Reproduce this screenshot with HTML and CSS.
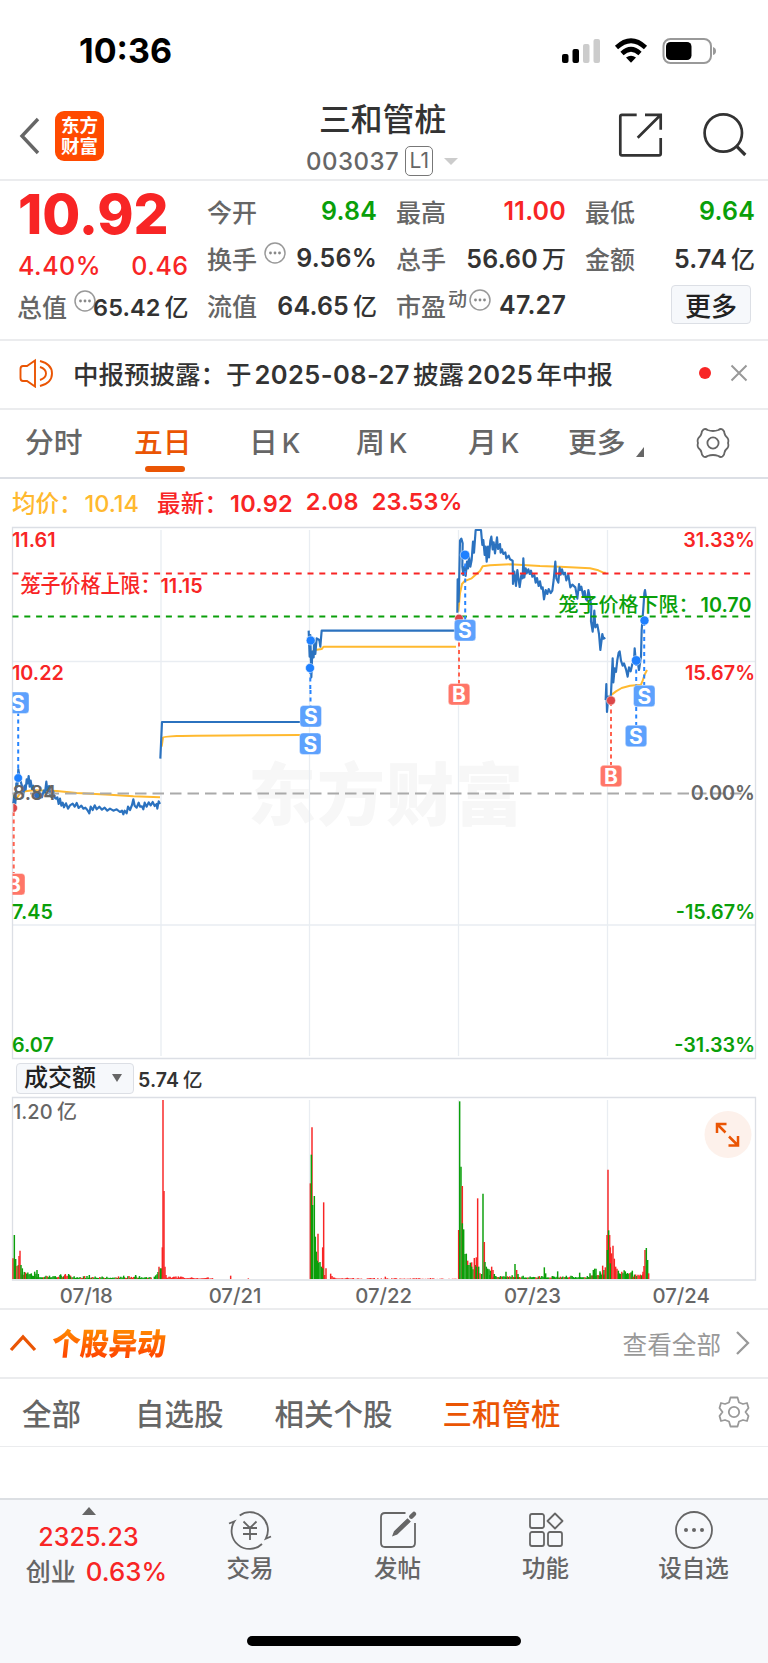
FILE: index.html
```
<!DOCTYPE html>
<html lang="zh-CN">
<head>
<meta charset="utf-8">
<title>三和管桩</title>
<link rel="stylesheet" href="styles.css">
</head>
<body>
<div class="status">
  <span class="clock">10:36</span>
  <svg class="status-icons" width="160" height="28" viewBox="560 37 160 28">
    <rect x="562" y="54" width="6.500" height="9" rx="2"/>
    <rect x="572.500" y="49" width="6.500" height="14" rx="2"/>
    <rect x="583" y="44" width="6.500" height="19" rx="2" fill="#ccc"/>
    <rect x="593.500" y="39" width="6.500" height="24" rx="2" fill="#ccc"/>
    <g fill="none" stroke="#000" stroke-width="4.600">
      <path d="M616.500 47.500Q631 34 645.500 47.500"/>
      <path d="M622 53.500Q631 45 640 53.500"/>
    </g>
    <path d="M626 57.500Q631 54 636 57.500L631 62.800Z"/>
    <rect x="663.500" y="39" width="47.500" height="24" rx="7" fill="#fff" stroke="#999" stroke-width="2"/>
    <rect x="666" y="42" width="25.500" height="18" rx="4.500"/>
    <path d="M713 47Q716 48 716 51T713 55Z" fill="#999"/>
  </svg>
</div>
<header class="head">
  <svg class="back" width="22" height="38" viewBox="0 0 22 38"><path d="M20 2L4 19L20 36" fill="none" stroke="#666" stroke-width="3.400"/></svg>
  <div class="logo"><span>东方</span><span>财富</span></div>
  <div class="title">
    <h1>三和管桩</h1>
    <div class="code"><span>003037</span><b>L1</b><i></i></div>
  </div>
  <svg class="share" width="46" height="46" viewBox="617 113 46 46"><path d="M636.700 115.800H622Q620.300 115.800 620.300 117.500V154.700Q620.300 156.400 622 156.400H659Q660.700 156.400 660.700 154.700V139M645 115.800H660.700V130.700M660 116.500L637.700 138.800" fill="none" stroke="#333" stroke-width="2.700"/></svg>
  <svg class="search" width="46" height="46" viewBox="702 113 46 46"><circle cx="723.300" cy="134" r="18.700" fill="none" stroke="#333" stroke-width="2.700"/><path d="M736 146.700L745.300 156" stroke="#333" stroke-width="3.200"/></svg>
</header>
<section class="quote">
  <div class="col first">
    <div class="price">10.92</div>
    <div class="cell red"><span>4.40%</span><span>0.46</span></div>
    <div class="cell"><label>总值</label><svg class="dots" width="22" height="22" viewBox="0 0 22 22"><use href="#dots"/></svg><span class="tight">65.42<em>亿</em></span></div>
  </div>
  <div class="col">
    <div class="cell"><label>今开</label><span class="green">9.84</span></div>
    <div class="cell"><label>换手</label><svg class="dots" width="22" height="22" viewBox="0 0 22 22"><g id="dots"><circle cx="11" cy="11" r="10" fill="none" stroke="#999" stroke-width="1.500"/><circle cx="6.500" cy="11" r="1.400" fill="#888"/><circle cx="11" cy="11" r="1.400" fill="#888"/><circle cx="15.500" cy="11" r="1.400" fill="#888"/></g></svg><span>9.56%</span></div>
    <div class="cell"><label>流值</label><span>64.65<em>亿</em></span></div>
  </div>
  <div class="col">
    <div class="cell"><label>最高</label><span class="red">11.00</span></div>
    <div class="cell"><label>总手</label><span>56.60<em>万</em></span></div>
    <div class="cell"><label>市盈<sup>动</sup></label><svg class="dots near" width="22" height="22" viewBox="0 0 22 22"><use href="#dots"/></svg><span>47.27</span></div>
  </div>
  <div class="col">
    <div class="cell"><label>最低</label><span class="green">9.64</span></div>
    <div class="cell"><label>金额</label><span>5.74<em>亿</em></span></div>
    <div class="cell"><button class="more">更多</button></div>
  </div>
</section>
<section class="notice">
  <svg width="34" height="30" viewBox="19 358 34 30" fill="none" stroke="#ea5504" stroke-width="1.900"><path d="M35 360.500L27 366H23Q20.500 366 20.500 369V378Q20.500 381 23 381H27L35 386.500Z"/><path d="M40 367Q46 369 46 373.500T40 380M40 361Q52 364 52 373.500T40 386"/></svg>
  <p>中报预披露：于<i>2025-08-27</i>披露<i>2025</i>年中报</p>
  <span class="dot"></span>
  <svg width="18" height="18" viewBox="0 0 18 18"><path d="M1.500 1.500L16.500 16.500M16.500 1.500L1.500 16.500" stroke="#999" stroke-width="2"/></svg>
</section>
<nav class="periods">
  <a>分时</a><a class="on">五日</a><a>日<i>K</i></a><a>周<i>K</i></a><a>月<i>K</i></a><a>更多<s></s></a>
  <svg class="gear" width="34" height="34" viewBox="-17 -17 34 34" fill="none" stroke="#666" stroke-width="1.800"><path d="M-9.500 -13.500Q-7.500 -14.700 -5.500 -13Q0 -11 5.500 -13Q7.500 -14.700 9.500 -13.500Q11.500 -12 11.500 -9.500Q12 -7 14.500 -5Q16 -3 15 0Q16 3 14.500 5Q12 7 11.500 9.500Q11.500 12 9.500 13.500Q7.500 14.700 5.500 13Q0 11 -5.500 13Q-7.500 14.700 -9.500 13.500Q-11.500 12 -11.500 9.500Q-12 7 -14.500 5Q-16 3 -15 0Q-16 -3 -14.500 -5Q-12 -7 -11.500 -9.500Q-11.500 -12 -9.500 -13.500Z"/><circle r="5.600"/></svg>
</nav>
<div class="legend"><span class="avg">均价：<i>10.14</i></span><span class="red">最新：<i>10.92</i></span><i class="red l3">2.08</i><i class="red l4">23.53%</i></div>
<svg class="chart" width="768" height="538" viewBox="0 522 768 538">
  <text class="water" x="248" y="820" textLength="275">东方财富</text>
  <g class="grid"><path d="M161 530V1056M309.500 530V1056M458.500 530V1056M607.500 530V1056M13 661.500H755M13 925H755"/><path class="frame" d="M12.500 527.500H755.500V1058.500H12.500Z"/></g>
  <g class="avg-line">
    <g transform="translate(0 520) scale(.33333)"><path d="M40 850L50 835L60 820L75 814L100 811L170 813L230 819L330 824L400 829L480 832M485 680L489 653Q490 650 530 648Q600 646 900 645M932 408L940 393L950 389L965 387L971 380H1368"/></g>
    <g transform="translate(440 520) scale(.33333)"><path d="M55 275L60 220L66 192L74 183L95 175L112 160L120 153L128 139L150 136L210 133L300 138L360 140L450 145L475 151L490 158L497 158M500 540L512 526L528 514L545 504L570 497L603 494L608 482L614 464L621 450"/></g>
  </g>
  <g class="price-line">
    <g transform="translate(0 520) scale(.33333)"><path d="M40 850L44 820L46 850L49 790L52 800L55 748L59 772L63 788L68 805L70 822L74 797L77 809L80 778L83 790L86 768L89 800L92 782L96 807L100 797L104 820L110 820L116 836L120 818L126 832L131 812L135 818L139 785L142 812L147 798L151 828L156 832L160 815L164 833L168 836L172 832L176 852L180 836L184 857L188 848L192 862L198 850L204 866L210 856L218 851L224 860L230 849L236 864L244 857L250 866L256 863L262 870L268 880L272 860L278 870L284 856L290 868L298 860L306 869L314 863L322 872L330 866L340 872L350 868L360 876L366 872L370 883L374 872L380 880L384 860L390 870L396 855L400 838L404 857L410 863L416 848L420 860L426 859L430 868L434 848L440 860L446 847L452 856L458 846L464 858L470 852L472 866L476 844L480 852M481 716L486 606H930M926 332L929 410L931 345L934 472L937 395L941 412L942 365L946 402L950 355L958 360L961 380L965 332H1368"/></g>
    <g transform="translate(440 520) scale(.33333)"><path d="M52 278L53 178L56 245L58 155L60 62L64 56L68 70L67 140L70 165L74 140L77 168L81 125L84 145L87 110L91 140L95 120L99 65L102 98L107 30H123L127 75L130 60L134 105L137 80L140 125L144 80L147 112L151 62L154 50L158 88L161 67L165 100L171 52L174 87L180 72L182 98L186 88L190 102L196 97L199 115L206 107L210 118L218 122L219 192L223 155L228 198L232 150L239 201L244 165L248 175L250 115L253 172L257 145L260 160L265 148L269 162L273 152L277 170L283 165L287 188L291 174L296 198L300 184L304 206L308 202L312 238L317 210L322 222L326 207L332 219L337 212L341 180L346 125L349 175L355 188L359 143L362 164L366 148L370 163L375 158L379 181L385 164L391 202L397 194L406 202L412 236L417 192L420 210L424 200L430 230L434 213L438 238L442 242L445 210L450 235L454 258L453 304L458 335L463 272L466 322L472 314L477 342L481 390L487 342L490 356L496 353M497 540L499 492L501 576L505 530L510 550L513 520L518 415L520 487L524 445L528 456L532 420L536 398L539 394L543 422L548 437L552 430L558 448L563 470L567 442L572 454L577 432L582 425L584 385L588 430L592 420L597 450L603 410L605 330L610 265L613 220L615 210L618 232"/></g>
  </g>
  <g fill="none" stroke-width="2">
    <path d="M12.500 573.500H752" stroke="#f82525" stroke-dasharray="6 5.800"/>
    <path d="M12.500 616.500H752" stroke="#0a9f0a" stroke-dasharray="6 5.800"/>
    <path d="M12.500 793.500H752" stroke="#aaa" stroke-dasharray="11.500 6"/>
  </g>
  <g class="sell-stem"><path d="M18.200 712V776M310.500 690V725M310.300 670V690M465.200 556V620M644.200 622V685M636.200 662V725"/></g>
  <g class="buy-stem"><path d="M13.700 812V873M459 620V684M611 702V765"/></g>
  <g fill="#1e80ff" stroke="#fff" stroke-opacity=".5" stroke-width="1">
    <circle cx="18.200" cy="778" r="4.300"/><circle cx="310.700" cy="640.500" r="4.500"/><circle cx="310" cy="668" r="4.500"/><circle cx="465" cy="555" r="4.800"/><circle cx="644.500" cy="620.500" r="4.500"/><circle cx="636.200" cy="660.500" r="4.800"/>
    <circle cx="37.500" cy="795" r="4" fill="#2f6fbe"/>
    <path d="M13 803.500A4.500 4.500 0 0 1 13 812.500Z" fill="#db4748"/><circle cx="459" cy="618.500" r="4.300" fill="#db4748"/><circle cx="611" cy="700.500" r="4.500" fill="#db4748"/>
  </g>
  <clipPath id="inside"><rect x="12.500" y="528" width="743" height="530"/></clipPath>
  <g class="tags" clip-path="url(#inside)">
    <g class="sell"><rect x="7.500" y="692" width="21.500" height="21.500" rx="3.500"/><rect x="300" y="705.500" width="21.500" height="21.500" rx="3.500"/><rect x="299.500" y="733" width="21.500" height="21.500" rx="3.500"/><rect x="454.300" y="619.500" width="21.500" height="21.500" rx="3.500"/><rect x="633.500" y="685.300" width="21.500" height="21.500" rx="3.500"/><rect x="625.300" y="725.300" width="21.500" height="21.500" rx="3.500"/></g>
    <g class="buy"><rect x="3.500" y="873.500" width="21.500" height="21.500" rx="3.500"/><rect x="448.300" y="683.500" width="21.500" height="21.500" rx="3.500"/><rect x="600.300" y="765.300" width="21.500" height="21.500" rx="3.500"/></g>
    <text x="18" y="710.500">S</text><text x="311" y="724">S</text><text x="310.500" y="751.500">S</text><text x="465" y="638">S</text><text x="644.500" y="704">S</text><text x="636" y="744">S</text>
    <text x="14" y="892">B</text><text x="459" y="702">B</text><text x="611" y="784">B</text>
  </g>
  <g class="axis">
    <g fill="#f82525"><text x="12" y="547">11.61</text><text x="12" y="680">10.22</text><text class="r" x="755" y="547">31.33%</text><text class="r" x="755" y="680">15.67%</text>
    <text class="cn" x="20.500" y="593">笼子价格上限：</text><text x="160.500" y="593">11.15</text></g>
    <g fill="#666"><text x="12.500" y="799.500">8.84</text><text class="r" x="755" y="799.500">0.00%</text></g>
    <g fill="#0a9f0a"><text x="12" y="919">7.45</text><text x="12" y="1051.500">6.07</text><text class="r" x="755" y="919">-15.67%</text><text class="r" x="755" y="1051.500">-31.33%</text>
    <text class="cn" x="558.500" y="612">笼子价格下限：</text><text class="r" x="751.500" y="612">10.70</text></g>
  </g>
</svg>
<div class="vol-head"><div class="select">成交额<i></i></div><span>5.74<em>亿</em></span></div>
<div class="volume">
  <svg id="vol" width="768" height="186" viewBox="0 1096 768 186">
    <path class="grid" d="M309.500 1100V1279M458.500 1100V1279M607.500 1100V1279"/>
    <path d="M12.500 1097.500H755.500V1280H12.500Z" fill="none" stroke="#dcdfe5" stroke-width="1.300"/>
    <text x="13" y="1118.500">1.20</text><text x="57" y="1119">亿</text>
    <g id="bars" transform="translate(0 1050) scale(.33333)"></g>
    <circle cx="728" cy="1134.500" r="23.500" fill="#fdf1eb"/>
    <path d="M725.500 1132.500L717 1124M717 1133V1124H726.500M729 1136.500L738 1145.500M738 1136V1145.500H728.500" fill="none" stroke="#ea5504" stroke-width="2.500"/>
  </svg>
</div>
<div class="dates"><span>07/18</span><span>07/21</span><span>07/22</span><span>07/23</span><span>07/24</span></div>
<section class="moves">
  <svg width="28" height="20" viewBox="0 0 28 20"><path d="M2 17L14 4L26 17" fill="none" stroke="#ea5504" stroke-width="3.300"/></svg>
  <h2>个股异动</h2>
  <a>查看全部</a>
  <svg width="16" height="26" viewBox="0 0 16 26"><path d="M2 2L13 13L2 24" fill="none" stroke="#999" stroke-width="2.300"/></svg>
</section>
<nav class="filters">
  <a>全部</a><a>自选股</a><a>相关个股</a><a class="on">三和管桩</a>
  <svg width="32" height="32" viewBox="-16 -16 32 32" fill="none" stroke="#999" stroke-width="1.800" stroke-linejoin="round"><path d="M-3.500 -14.500H3.500L5 -9.500L9 -8L13 -9L14.500 -4L11.500 0L14.500 4L13 9L9 8L5 9.500L3.500 14.500H-3.500L-5 9.500L-9 8L-13 9L-14.500 4L-11.500 0L-14.500 -4L-13 -9L-9 -8L-5 -9.500Z"/><circle r="5.200"/></svg>
</nav>
<main class="blank"></main>
<footer class="bar">
  <div class="index"><i class="up"></i><b>2325.23</b><p>创业<b>0.63%</b></p></div>
  <div class="tool"><svg width="44" height="40" viewBox="-22 -20 44 40"><path d="M-10.300 -14.600A18 18 0 0 1 15.800 8.700L21 6.500M12 14A18 18 0 0 1 -15.600 -8.700L-21 -6.500M-6.500 -8.500L0 -2L6.500 -8.500M0 -2V10M-7 -2H7M-7 4H7"/></svg><span>交易</span></div>
  <div class="tool"><svg width="44" height="40" viewBox="-22 -20 44 40"><path d="M7.500 -17H-13Q-17 -17 -17 -13V13Q-17 17 -13 17H13Q17 17 17 13V-7"/><path d="M-5 5.500L-3.500 1.500L9.500 -11L12 -8.500L-1 4Z" fill="#666" stroke-width="1.200"/><path d="M13.300 -13.300L16 -16" stroke-width="4.500" stroke-linecap="round"/></svg><span>发帖</span></div>
  <div class="tool"><svg width="44" height="40" viewBox="-22 -20 44 40"><rect x="-16" y="-16" width="14" height="14" rx="2"/><rect x="-16" y="2" width="14" height="14" rx="2"/><rect x="2" y="2" width="14" height="14" rx="2"/><path d="M9 -16.500L16.500 -9L9 -1.500L1.500 -9Z" stroke-linejoin="round"/></svg><span>功能</span></div>
  <div class="tool"><svg width="44" height="40" viewBox="-22 -20 44 40"><circle r="18"/><g fill="#666" stroke="none"><circle cx="-8" r="2"/><circle r="2"/><circle cx="8" r="2"/></g></svg><span>设自选</span></div>
</footer>
<div class="home"><i></i></div>
<script src="volume.js"></script>
</body>
</html>
```
FILE: styles.css
```
* { box-sizing: border-box; }
body { margin: 0; width: 768px; height: 1663px; overflow: hidden; background: #fff; color: #333; font-family: Inter, "Noto Sans CJK SC", sans-serif; font-weight: 500; }
svg { display: block; flex: none; }
i, em { font-style: normal; }
h1, h2, p { margin: 0; }
.red { color: #f82525; }
.green { color: #0a9f0a; }
.status { display: flex; justify-content: space-between; align-items: flex-start; height: 97px; padding: 37px 48px 0 79px; }
.clock { font-size: 34px; line-height: 28px; font-weight: 700; color: #000; }
.head { display: flex; height: 84px; border-bottom: 2px solid #ebecee; padding-left: 18px; }
.back { margin-top: 20px; }
.logo { width: 49px; height: 50px; margin: 14px 0 0 15px; padding-top: 4px; border-radius: 9px; background: #ff4a00; color: #fff; font-size: 18.500px; line-height: 20.500px; font-weight: 700; display: flex; flex-direction: column; align-items: center; }
.title { display: flex; flex-direction: column; align-items: flex-start; margin-left: 202px; width: 260px; }
.title h1 { font-size: 31.800px; line-height: 40px; margin-top: 3px; padding-left: 13px; font-weight: 500; }
.share { margin-left: 51px; margin-top: 15px; }
.search { margin-left: 39px; margin-top: 15px; }
.code { display: flex; align-items: center; height: 30px; margin-top: 6px; font-size: 24px; color: #666; letter-spacing: .5px; }
.code b { width: 28px; height: 30px; border: 1.500px solid #777; border-radius: 5px; margin-left: 6px; font-size: 21px; line-height: 27px; font-weight: 400; text-align: center; letter-spacing: 0; }
.code i { border: 7.500px solid transparent; border-top-color: #ccc; border-bottom: 0; margin-left: 11px; }
.quote { display: grid; grid-template-columns: 170px 169px 169px 169px; column-gap: 20px; padding: 7px 0 0 18px; height: 160px; border-bottom: 2px solid #ebecee; }
.col { display: grid; grid-template-rows: 47px 47px 47px; margin-top: -1px; }
.price { color: #f82525; font-size: 55px; line-height: 54px; font-weight: 800; }
.first { grid-template-rows: 54px 47px 47px; }
.cell { display: flex; align-items: center; height: 47px; font-size: 25px; white-space: nowrap; letter-spacing: .2px; }
.first .cell { margin-top: 1px; }
.first .cell:last-child { margin-top: -6px; }
.cell label { color: #666; letter-spacing: 0; position: relative; left: -1px; }
.cell span { margin-left: auto; font-weight: 600; }
.cell.red span { font-weight: 500; letter-spacing: .5px; }
.cell.red span:first-child { margin-left: 0; }
.cell em { margin-left: 4px; letter-spacing: 0; font-size: 24px; font-weight: 500; }
.dots { margin: -10px 0 0 6px; }
.cell .tight { margin-left: -3px; font-size: 23.500px; letter-spacing: .1px; }
.cell sup { font-size: 19px; line-height: 20px; vertical-align: 10px; margin-left: 2px; }
.dots.near { margin-left: 1px; }
.more { width: 80px; height: 39px; margin-left: 85px; padding: 0; border: 1.500px solid #dcdfe5; border-radius: 4px; background: #f6f8fb; color: #222; font: 500 26px/33px "Noto Sans CJK SC", sans-serif; }
.notice { display: flex; align-items: center; height: 69px; padding-left: 19px; padding-bottom: 3px; border-bottom: 2px solid #ebecee; }
.notice p { width: 626px; margin-left: 20px; margin-top: -2px; font-size: 25.500px; white-space: nowrap; }
.notice p i { margin: 0 3px; letter-spacing: .4px; font-weight: 600; }
.dot { width: 12px; height: 12px; border-radius: 6px; background: #f82525; }
.notice .dot + svg { margin-left: 19px; }
.periods { display: grid; grid-template-columns: 109px 115px 107px 112px 100px 128px 36px; align-items: center; height: 69px; border-bottom: 2px solid #dcdfe5; padding-left: 25px; color: #666; font-size: 28.800px; }
.periods a { position: relative; white-space: nowrap; line-height: 66px; height: 67px; }
.periods i { margin-left: 4px; font-size: 27px; }
.periods .gear { margin-top: -2px; }
.periods .on { color: #ea5504; }
.periods .on::after { content: ""; position: absolute; left: 11px; bottom: 5px; width: 40px; height: 6px; border-radius: 3px; background: #ea5504; }
.periods s { display: inline-block; border-left: 8px solid transparent; border-bottom: 10px solid #666; margin-left: 10px; vertical-align: -4px; }
.legend { display: flex; height: 44px; margin-bottom: -1px; padding-left: 12px; padding-top: 1px; align-items: center; font-size: 23.500px; white-space: nowrap; }
.avg { color: #ffb92f; width: 145px; }
.legend span i { margin-left: 2px; }
.legend .red, .legend .red i { letter-spacing: .2px; }
.legend .red i, .legend i.red { font-weight: 600; }
.l3 { margin-left: 13px; }
.l4 { margin-left: 13px; }
.chart text, .volume text { font-size: 20px; font-weight: 500; }
.chart .axis text { font-weight: 600; font-size: 19.800px; }
.chart .axis .cn { font-weight: 500; font-size: 20px; }
.chart .water { font: 900 68px "Noto Sans CJK SC", sans-serif; fill: #f7f7f7; }
.grid { fill: none; stroke: #e9edf2; stroke-width: 1.300; }
.frame { stroke: #dcdfe5; }
.avg-line { fill: none; stroke: #ffb92f; stroke-width: 6px; stroke-linejoin: round; }
.price-line { fill: none; stroke: #2b72bf; stroke-width: 6.500px; stroke-linejoin: round; }
.sell-stem, .buy-stem { fill: none; stroke: #2684ff; stroke-width: 2px; stroke-dasharray: 4 3.500; }
.buy-stem { stroke: #ff624f; }
.sell { fill: #5da1fd; }
.buy { fill: #ff7668; }
.tags text { fill: #fff; font-weight: 700; font-size: 21px; text-anchor: middle; }
.tags rect { stroke: #fff; stroke-width: .4px; }
.chart .r { text-anchor: end; }
.vol-head { display: flex; align-items: center; height: 36px; padding-left: 16px; font-size: 19.500px; }
.select { width: 118px; height: 31px; border: 1.500px solid #dcdfe5; border-radius: 4px; background: #f6f8fb; display: flex; align-items: center; padding-left: 7px; font-size: 24px; line-height: 30px; color: #222; }
.select i { border: 5px solid transparent; border-top: 8px solid #666; border-bottom: 0; margin-left: 16px; }
.vol-head span { margin-left: 4px; font-weight: 600; letter-spacing: .1px; }
.vol-head em { margin-left: 4px; font-weight: 500; }
.volume text { fill: #666; }
.dates { display: grid; grid-template-columns: repeat(5, 148.700px); height: 28px; padding-left: 12px; text-align: center; font-size: 20.300px; line-height: 28px; color: #666; border-bottom: 2px solid #ebecee; }
.moves { display: flex; align-items: center; height: 69px; padding-left: 9px; padding-bottom: 2px; border-bottom: 2px solid #ebecee; }
.moves h2 { margin-left: 15px; margin-top: -2px; font: 900 28.500px/40px "Noto Sans CJK SC", sans-serif; transform: skewX(-6deg) scaleY(1.08); background: linear-gradient(#ff8a00 20%, #ff4a00 80%); background-clip: text; color: transparent; }
.moves a { margin-left: auto; color: #999; font-size: 24.600px; font-weight: 400; }
.moves a + svg { margin: 0 17px 0 14px; }
.filters { display: flex; align-items: center; height: 68px; padding-left: 22px; padding-bottom: 2px; border-bottom: 1px solid #ebecee; font-size: 29.500px; color: #666; white-space: nowrap; }
.filters a { margin-right: 54px; }
.filters a:nth-child(2) { margin-right: 51px; }
.filters a:nth-child(3) { margin-right: 50px; }
.filters a:nth-child(4) { margin-right: 0; }
.filters .on { color: #ea5504; }
.filters svg { margin-left: auto; margin-right: 18px; }
.blank { height: 51px; }
.bar { display: grid; grid-template-columns: 177px 146px 149px 147px 149px; height: 138px; background: #f6f8fb; border-top: 2px solid #dcdfe3; color: #666; }
.index { display: flex; flex-direction: column; align-items: center; font-size: 25px; }
.index b { font-weight: 500; color: #f82525; line-height: 36px; letter-spacing: .1px; }
.index p { line-height: 34px; white-space: nowrap; padding-left: 16px; }
.index p b { margin-left: 10px; font-size: 25.800px; line-height: 34px; }
.up { border: 7.500px solid transparent; border-bottom: 8px solid #666; border-top: 0; margin: 7px 0 4px; }
.tool { display: flex; flex-direction: column; align-items: center; padding-top: 10px; font-size: 23.500px; line-height: 38px; }
.tool svg { fill: none; stroke: #666; stroke-width: 1.800px; }
.home { display: flex; justify-content: center; height: 27px; background: #f6f8fb; }
.home i { width: 274px; height: 10px; border-radius: 5px; background: #000; }
```
FILE: volume.js
```
// Bar tops, in thirds of a pixel; [x, top, colour]
const BASE = 687;
const bars = [];
const seed = (n) => Math.abs(Math.sin(n * 12.9898) * 43758.5453) % 1;
function floor(from, to, low, high, green) {
  for (let x = from; x < to; x += 3.5) {
    const r = seed(x);
    bars.push([x, BASE - low - (high - low) * r * r, seed(x + 7) < green ? 'g' : 'r']);
  }
}
floor(66, 110, 9, 22, .8);
floor(110, 212, 5, 12, .75);
floor(212, 455, 3, 9, .7);
floor(500, 550, 3, 8, .05);
floor(550, 640, 1, 4, 0);
floor(1000, 1060, 1, 5, 0);
floor(1060, 1370, 0, 3, 0);
floor(1470, 1545, 4, 13, .7);
floor(1545, 1770, 4, 10, .7);
floor(1770, 1818, 9, 20, .75);
floor(1855, 1900, 15, 28, .8);
floor(1900, 1930, 7, 15, .7);
[
  [39,625,'r'],[43,555,'g'],[47,627,'g'],[51,648,'r'],[55,645,'g'],[57,618,'r'],[60,602,'r'],[63,645,'g'],[67,655,'g'],
  [104,665,'g'],[111,660,'g'],[115,672,'g'],[182,673,'g'],[196,672,'r'],[206,672,'g'],[268,675,'g'],[371,677,'g'],[407,675,'g'],
  [463,680,'g'],[467,676,'g'],[471,673,'g'],[474,666,'g'],[477,650,'r'],[481,655,'g'],[484,655,'g'],[487,592,'r'],[489,150,'r'],[492,423,'r'],[495,650,'r'],[498,675,'r'],
  [575,682,'r'],[624,682,'r'],[692,677,'r'],[745,685,'r'],[1156,680,'r'],
  [931,400,'r'],[936,232,'r'],[934,314,'g'],[938,465,'g'],[943,438,'g'],[946,560,'g'],[949,605,'g'],[954,551,'r'],[952,632,'g'],[956,638,'g'],[960,636,'g'],[964,650,'g'],[968,592,'r'],[971,457,'r'],[968,655,'g'],[974,675,'r'],[978,655,'r'],[992,671,'r'],[996,678,'r'],
  [1376,540,'r'],[1379,154,'g'],[1383,350,'g'],[1387,408,'r'],[1387,520,'g'],[1391,538,'g'],[1395,612,'g'],[1399,611,'g'],[1403,632,'r'],[1403,645,'g'],[1407,645,'g'],[1411,638,'g'],[1415,637,'r'],[1415,650,'g'],[1419,658,'g'],[1423,624,'r'],[1427,645,'g'],[1429,622,'r'],[1433,445,'r'],[1429,650,'g'],[1436,650,'g'],[1440,670,'r'],[1445,672,'g'],[1449,431,'g'],[1453,576,'r'],[1455,636,'g'],[1459,650,'g'],[1463,656,'g'],[1467,658,'g'],[1471,662,'g'],[1475,650,'r'],[1479,660,'r'],[1483,672,'g'],
  [1518,665,'g'],[1545,642,'g'],[1550,660,'r'],[1554,672,'g'],[1633,652,'g'],[1637,670,'g'],[1673,664,'g'],[1739,668,'g'],[1780,660,'g'],[1784,656,'g'],[1788,656,'g'],[1800,664,'g'],[1808,647,'r'],[1812,660,'g'],[1816,652,'r'],
  [1821,555,'r'],[1824,359,'r'],[1822,600,'g'],[1826,541,'g'],[1829,555,'r'],[1831,592,'r'],[1835,610,'r'],[1839,587,'r'],[1843,626,'r'],[1831,640,'g'],[1847,650,'r'],[1851,656,'r'],[1855,662,'g'],
  [1929,665,'r'],[1932,648,'r'],[1935,600,'r'],[1939,594,'g'],[1943,630,'g'],[1946,670,'r']
].forEach((b) => bars.push(b));
const ns = 'http://www.w3.org/2000/svg';
const host = document.getElementById('bars');
bars.forEach(([x, top, c]) => {
  const p = document.createElementNS(ns, 'path');
  p.setAttribute('d', `M${x} ${BASE}V${top}`);
  p.setAttribute('stroke', c === 'r' ? '#f82525' : '#0a9f0a');
  p.setAttribute('stroke-width', 4.4);
  host.appendChild(p);
});
```
